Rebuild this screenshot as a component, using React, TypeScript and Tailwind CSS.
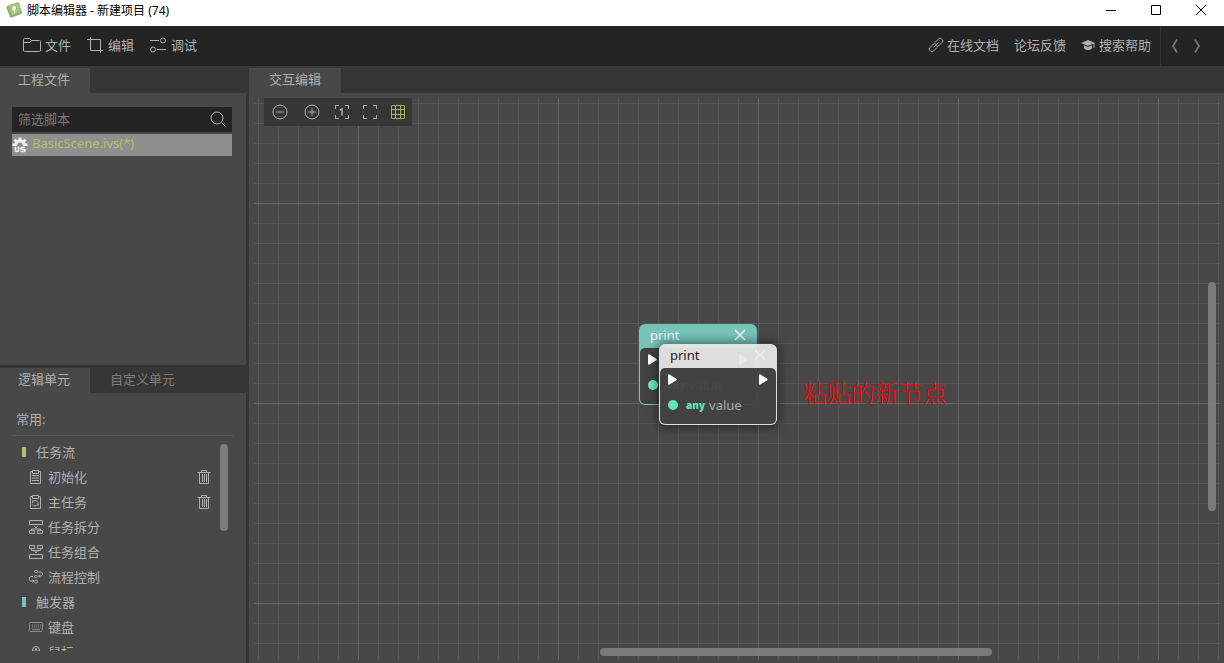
import { useState } from "react";
import type { ReactNode } from "react";
import clsx from "clsx";

interface UnitItem {
    label: string;
    icon?: ReactNode;
    accent?: string;
    removable?: boolean;
}

interface IconProps {
    children: ReactNode;
    className?: string;
    box?: string;
}

function Icon({ children, className = "size-4", box = "0 0 16 16" }: IconProps) {
    return (
        <svg viewBox={box} className={clsx("shrink-0", className)} fill="none" stroke="currentColor" strokeWidth="1" aria-hidden="true">
            {children}
        </svg>
    );
}

const clipboard = <path d="M4.500 2.500H2.500V14.500H12.500V2.500H10.500M4.500 1.500H10.500V4.500H4.500Z" />;

const units: UnitItem[] = [
    { label: "任务流", accent: "bg-[#b3c165]" },
    { label: "初始化", removable: true, icon: <Icon>{clipboard}<path d="M4 6.500H11M4 9H11M4 11.500H11" /></Icon> },
    {
        label: "主任务",
        removable: true,
        icon: <Icon>{clipboard}<path d="M4.500 9V6.500M4.500 8C5 6 9 6 10 8.500M10 9V12M10 10C9 12.500 5 12.500 4.500 10.500" /></Icon>,
    },
    {
        label: "任务拆分",
        icon: <Icon><path d="M1.500 1.500H14.500V5.500H1.500ZM1.500 11.500H6.500V14.500H1.500ZM9.500 11.500H14.500V14.500H9.500ZM3.500 11V10H12.500V11M6.500 7L8 9L9.500 7" /></Icon>,
    },
    {
        label: "任务组合",
        icon: <Icon><path d="M1.500 1.500H6.500V4.500H1.500ZM9.500 1.500H14.500V4.500H9.500ZM1.500 10.500H14.500V14.500H1.500ZM3.500 5V6.500H12.500V5M6.500 7L8 9L9.500 7" /></Icon>,
    },
    {
        label: "流程控制",
        icon: (
            <Icon>
                <rect x="6.500" y="1.500" width="3" height="2" rx="1" />
                <rect x="6.500" y="6.500" width="3" height="2" rx="1" />
                <circle cx="8" cy="12.500" r="1.500" />
                <path d="M9.500 3H13C15.500 4 14.500 7 12.500 7H11M12 5.500L10.500 7L12 8.500M5 7.500H3C0.500 8 0.500 12 3 12H5.500M4.500 10.500L6 12L4.500 13.500" />
            </Icon>
        ),
    },
    { label: "触发器", accent: "bg-[#76c7bb]" },
    {
        label: "键盘",
        icon: (
            <Icon className="size-4 text-[#8c8c8c]">
                <rect x="1.500" y="3.500" width="13" height="9" rx="1" />
                <path d="M4 6H13M4 8H13" strokeDasharray="1 1" />
                <path d="M4 10.500H12" />
            </Icon>
        ),
    },
    {
        label: "鼠标",
        icon: <Icon><rect x="4.500" y="2.500" width="7" height="12" rx="3.500" /><path d="M4.500 7H11.500M7.500 4.500H8.500V6H7.500Z" /></Icon>,
    },
];

const canvasTools = [
    { name: "缩小", width: "w-8", icon: <Icon><circle cx="8" cy="8" r="7" /><path d="M4 8H12" /></Icon> },
    { name: "放大", width: "w-8", icon: <Icon><circle cx="8" cy="8" r="7" /><path d="M4 8H12M8 4V12" /></Icon> },
    { name: "原始大小", width: "w-7", icon: <Icon><path d="M5 1.500H1.500V5M11 1.500H14.500V5M5 14.500H1.500V11M11 14.500H14.500V11" /><path d="M6 6L8 5V11.500" strokeWidth="1.4" /></Icon> },
    { name: "适应窗口", width: "w-7", icon: <Icon><path d="M5 1.500H1.500V5M11 1.500H14.500V5M5 14.500H1.500V11M11 14.500H14.500V11" /></Icon> },
    {
        name: "网格",
        width: "w-7 text-[#a3b35f]",
        icon: <Icon><rect x="1.500" y="1.500" width="13" height="13" rx="0.500" /><path d="M5.500 2V14M10.500 2V14M2 5.500H14M2 10.500H14" /></Icon>,
    },
];

function TitleBar() {
    return (
        <header className="flex h-[26px] shrink-0 items-center bg-white pl-1.5 text-black">
            <svg viewBox="0 0 17 18" className="mb-1.5 h-[18px] w-[17px]" aria-hidden="true">
                <path d="M1 5L11 1.500Q12 1 13 2L16 11Q16 12.500 15 13L6 16.500Q4.500 17 4 16L0.500 7Q0 5.500 1 5Z" fill="#8fb568" />
                <path d="M3 4L11 1.500Q12 1 13 2L15.500 10L6 14Z" fill="#a5c783" />
                <path d="M7 5.500Q9 4 10 6.500Q10 8 9 8.500L9.500 12L8 12.500L7.500 9Q5.500 7.500 7 5.500Z" fill="#f4f8ef" />
            </svg>
            <h1 className="mb-1 ml-1 flex-1 text-xs">脚本编辑器 - 新建项目 (74)</h1>
            <div className="mb-1.5 flex">
                <button type="button" aria-label="最小化" className="flex w-[45px] justify-center">
                    <Icon className="size-3" box="0 0 12 12"><path d="M1 6.500H11" /></Icon>
                </button>
                <button type="button" aria-label="最大化" className="flex w-[45px] justify-center">
                    <Icon className="size-3" box="0 0 12 12"><path d="M1.500 1.500H10.500V10.500H1.500Z" /></Icon>
                </button>
                <button type="button" aria-label="关闭" className="flex w-[46px] justify-center">
                    <Icon className="size-3" box="0 0 12 12"><path d="M1 1L11 11M11 1L1 11" /></Icon>
                </button>
            </div>
        </header>
    );
}

function MenuBar() {
    return (
        <nav className="flex h-10 shrink-0 items-center bg-[#242424] pl-[23px]">
            <div className="flex flex-1 gap-[15px] pb-0.5">
                <button type="button" className="flex items-center gap-1">
                    <Icon className="h-4 w-[18px]" box="0 0 18 16">
                        <path d="M0.500 13V2.500Q0.500 1.500 1.500 1.500H6.500L8.500 3.500H16.500Q17.500 3.500 17.500 4.500V13Q17.500 14.500 16.500 14.500H1.500Q0.500 14.500 0.500 13ZM0.500 5.500H7L8.500 3.500" />
                    </Icon>
                    文件
                </button>
                <button type="button" className="flex items-center gap-1">
                    <Icon className="h-4 w-[18px]" box="0 0 18 16">
                        <path d="M4.500 0V13.500H17M1 2.500H14.500V16" />
                    </Icon>
                    编辑
                </button>
                <button type="button" className="flex items-center gap-1">
                    <Icon className="h-4 w-[18px]" box="0 0 18 16">
                        <path d="M1 3.500H10M8 12.500H17" />
                        <circle cx="14" cy="3.500" r="2.500" />
                        <circle cx="4" cy="12.500" r="2.500" />
                    </Icon>
                    调试
                </button>
            </div>
            <div className="flex gap-[15px] pr-[9px] pb-0.5">
                <a href="#docs" className="flex items-center gap-[3px]">
                    <Icon>
                        <path d="M7 5.500L11 1.500Q12 0.500 13 1.500L14.500 3Q15.500 4 14.500 5L10.500 9Q9.500 10 8.500 9L7.500 8M9 10.500L5 14.500Q4 15.500 3 14.500L1.500 13Q0.500 12 1.500 11L5.500 7Q6.500 6 7.500 7L8.500 8M5.500 10.500L10.500 5.500" />
                    </Icon>
                    在线文档
                </a>
                <a href="#forum">论坛反馈</a>
                <a href="#help" className="flex items-center gap-1">
                    <svg viewBox="0 0 14 14" className="size-3.5" fill="currentColor" aria-hidden="true">
                        <path d="M7 2L14 5L7 8L0 5ZM3 7.200L7 9L11 7.200V10.500Q7 13.500 3 10.500ZM12.500 5H13.500V10H12.500Z" />
                    </svg>
                    搜索帮助
                </a>
            </div>
            <div className="flex h-full w-16 items-center gap-1.5 border-l border-[#323232] pl-1.5 text-[#757575]">
                <button type="button" aria-label="后退">
                    <Icon><path d="M10 1.500L6 8L10 14.500" strokeWidth="1.8" /></Icon>
                </button>
                <button type="button" aria-label="前进">
                    <Icon><path d="M6 1.500L10 8L6 14.500" strokeWidth="1.8" /></Icon>
                </button>
            </div>
        </nav>
    );
}

function ProjectFiles() {
    return (
        <section className="flex min-h-0 flex-1 flex-col pt-0.5">
            <div role="tablist" className="flex">
                <button type="button" role="tab" aria-selected="true" className="h-[25px] w-[90px] bg-[#484848] pr-0.5 pb-1">工程文件</button>
            </div>
            <div className="flex-1 bg-[#484848] py-3.5 pr-3.5 pl-3">
                <div className="flex h-[25px] items-center bg-[#242424] pr-1.5 pb-0.5 pl-1.5">
                    <input type="text" aria-label="筛选脚本" placeholder="筛选脚本" className="min-w-0 flex-1 bg-transparent outline-none placeholder:text-[#7a7a7a]" />
                    <Icon><circle cx="7" cy="7" r="6" /><path d="M11.500 11.500L15.500 15.500" /></Icon>
                </div>
                <a href="#basic-scene" className="mt-0.5 flex h-[22px] items-center gap-1 bg-[#8f8f8f] text-[#b3c165]">
                    <svg viewBox="0 0 16 16" className="size-4" fill="#f0f0f0" aria-hidden="true">
                        <path d="M6.500 0.500H9.500V2.500L11 3L12.500 1.500L14.500 3.500L13 5L13.500 6.500H15.500V9H11Q11 5.500 8 5.500Q5 5.500 5 9H0.500V6.500H2.500L3 5L1.500 3.500L3.500 1.500L5 3L6.500 2.500Z" />
                        <path d="M3.500 9.500V13.500Q3.500 14.500 5 14.500Q6.500 14.500 6.500 13.500V9.500M13 10.500H10Q9 10.500 9 11.500Q9 12.500 10 12.500H12Q13 12.500 13 13.500Q13 14.500 12 14.500H8.500" fill="none" stroke="#f0f0f0" strokeWidth="1.7" />
                    </svg>
                    <span className="pb-1">BasicScene.ivs(*)</span>
                </a>
            </div>
        </section>
    );
}

function LogicUnits() {
    const [tab, setTab] = useState("logic");

    return (
        <section className="flex h-[298px] shrink-0 flex-col pt-[3px]">
            <div role="tablist" className="flex">
                <button
                    type="button"
                    role="tab"
                    aria-selected={tab === "logic"}
                    onClick={() => setTab("logic")}
                    className={clsx("h-[25px] w-[90px] pr-0.5 pb-1", tab === "logic" ? "bg-[#484848]" : "text-[#7d7d7d]")}
                >
                    逻辑单元
                </button>
                <button
                    type="button"
                    role="tab"
                    aria-selected={tab === "custom"}
                    onClick={() => setTab("custom")}
                    className={clsx("h-[25px] w-[105px] pb-1", tab === "custom" ? "bg-[#484848]" : "text-[#7d7d7d]")}
                >
                    自定义单元
                </button>
            </div>
            <div className="flex min-h-0 flex-1 flex-col bg-[#484848] px-3 pt-4 pb-3">
                <h2 className="border-b border-[#555555] pb-1.5 pl-1">常用:</h2>
                <div className="mt-[3px] flex min-h-0 flex-1 pr-1.5">
                    <ul className="flex-1 overflow-hidden">
                        {units.map((unit) => (
                            <li key={unit.label} className={clsx("flex h-[25px] items-center", unit.accent ? "gap-2.5 pl-2.5" : "gap-1 pl-4")}>
                                {unit.accent ? <span className={clsx("h-2.5 w-1", unit.accent)} /> : unit.icon}
                                <span className="flex-1">{unit.label}</span>
                                {unit.removable && (
                                    <button type="button" aria-label={`删除${unit.label}`} className="mr-2">
                                        <Icon><path d="M1.500 3.500H14.500M5.500 3V1.500H10.500V3M3.500 4V14.500H12.500V4M6.500 5V13M8.500 5V13M10.500 5V13" /></Icon>
                                    </button>
                                )}
                            </li>
                        ))}
                    </ul>
                    <div className="mt-[5px] h-[87px] w-2 rounded-full bg-[#7c7c7c]" />
                </div>
            </div>
        </section>
    );
}

function FlowArrow() {
    return (
        <svg viewBox="0 0 9 11" className="h-[11px] w-[9px]" fill="#ffffff" aria-hidden="true">
            <path d="M0 1Q0 0 1.500 0.500L8 4.500Q9.500 5.500 8 6.500L1.500 10.500Q0 11 0 10Z" />
        </svg>
    );
}

interface PrintNodeProps {
    className: string;
    color: string;
    titleColor: string;
}

function PrintNode({ className, color, titleColor }: PrintNodeProps) {
    return (
        <article className={clsx("absolute flex h-[81px] w-[118px] flex-col rounded-md p-px", className, color)}>
            <div className="flex h-[23px] shrink-0 items-center justify-between pr-2.5 pb-1 pl-2.5">
                <h3 className={titleColor}>print</h3>
                <button type="button" aria-label="删除节点" className="text-[#f5f5f5]">
                    <Icon className="size-3" box="0 0 12 12"><path d="M1 1L11 11M11 1L1 11" strokeWidth="1.5" /></Icon>
                </button>
            </div>
            <div className="flex-1 rounded-[5px] bg-[#424242] px-2 pt-1.5">
                <div className="flex justify-between">
                    <FlowArrow />
                    <FlowArrow />
                </div>
                <div className="mt-2.5 flex items-center">
                    <span className="size-2.5 rounded-full bg-[#65edbd]" />
                    <span className="ml-2 text-[10px] font-black text-[#65edbd]">any</span>
                    <span className="ml-1 text-[#b0b0b0]">value</span>
                </div>
            </div>
        </article>
    );
}

function FlowCanvas() {
    return (
        <main className="flex min-w-0 flex-1 flex-col pt-0.5">
            <div role="tablist" className="flex">
                <button type="button" role="tab" aria-selected="true" className="h-[25px] w-[92px] bg-[#484848] pb-1">交互编辑</button>
            </div>
            <div className="relative flex min-h-0 flex-1 overflow-hidden bg-[#484848] pt-[5px] pr-1 pb-[3px] pl-[5px]">
                <div className="flex-1 bg-[linear-gradient(to_right,#666666_1px,transparent_1px),linear-gradient(to_bottom,#666666_1px,transparent_1px),linear-gradient(to_right,#565656_1px,transparent_1px),linear-gradient(to_bottom,#565656_1px,transparent_1px)] bg-[position:104px_0px,0px_105px,4px_0px,0px_5px] bg-[length:200px_200px,200px_200px,20px_20px,20px_20px]" />
                <div className="absolute top-[5px] left-[15px] flex h-7 bg-[#363636]">
                    {canvasTools.map((tool) => (
                        <button key={tool.name} type="button" aria-label={tool.name} className={clsx("flex items-center justify-center", tool.width)}>
                            {tool.icon}
                        </button>
                    ))}
                </div>
                <PrintNode className="top-[231px] left-[390px]" color="bg-[#76c3b8]" titleColor="text-[#f2f2f2]" />
                <PrintNode className="top-[251px] left-[410px] opacity-95 shadow-[0_0_8px_3px_#00000066]" color="bg-[#e6e6e6]" titleColor="text-[#222222]" />
                <p className="absolute top-[284px] left-[554px] text-2xl font-light text-[#ff0000]">粘贴的新节点</p>
                <div className="absolute top-[189px] right-2 h-[229px] w-2 rounded-full bg-[#808080]/90" />
                <div className="absolute bottom-[7px] left-[351px] h-2 w-[392px] rounded-full bg-[#808080]/90" />
            </div>
        </main>
    );
}

export default function App() {
    return (
        <div className="flex h-screen flex-col bg-[#363636] font-['Noto_Sans','Noto_Sans_CJK_SC',sans-serif] text-[13px] leading-5 text-[#b0b0b0]">
            <TitleBar />
            <MenuBar />
            <div className="flex min-h-0 flex-1 gap-[3px]">
                <aside className="flex w-[246px] shrink-0 flex-col">
                    <ProjectFiles />
                    <LogicUnits />
                </aside>
                <FlowCanvas />
            </div>
        </div>
    );
}
